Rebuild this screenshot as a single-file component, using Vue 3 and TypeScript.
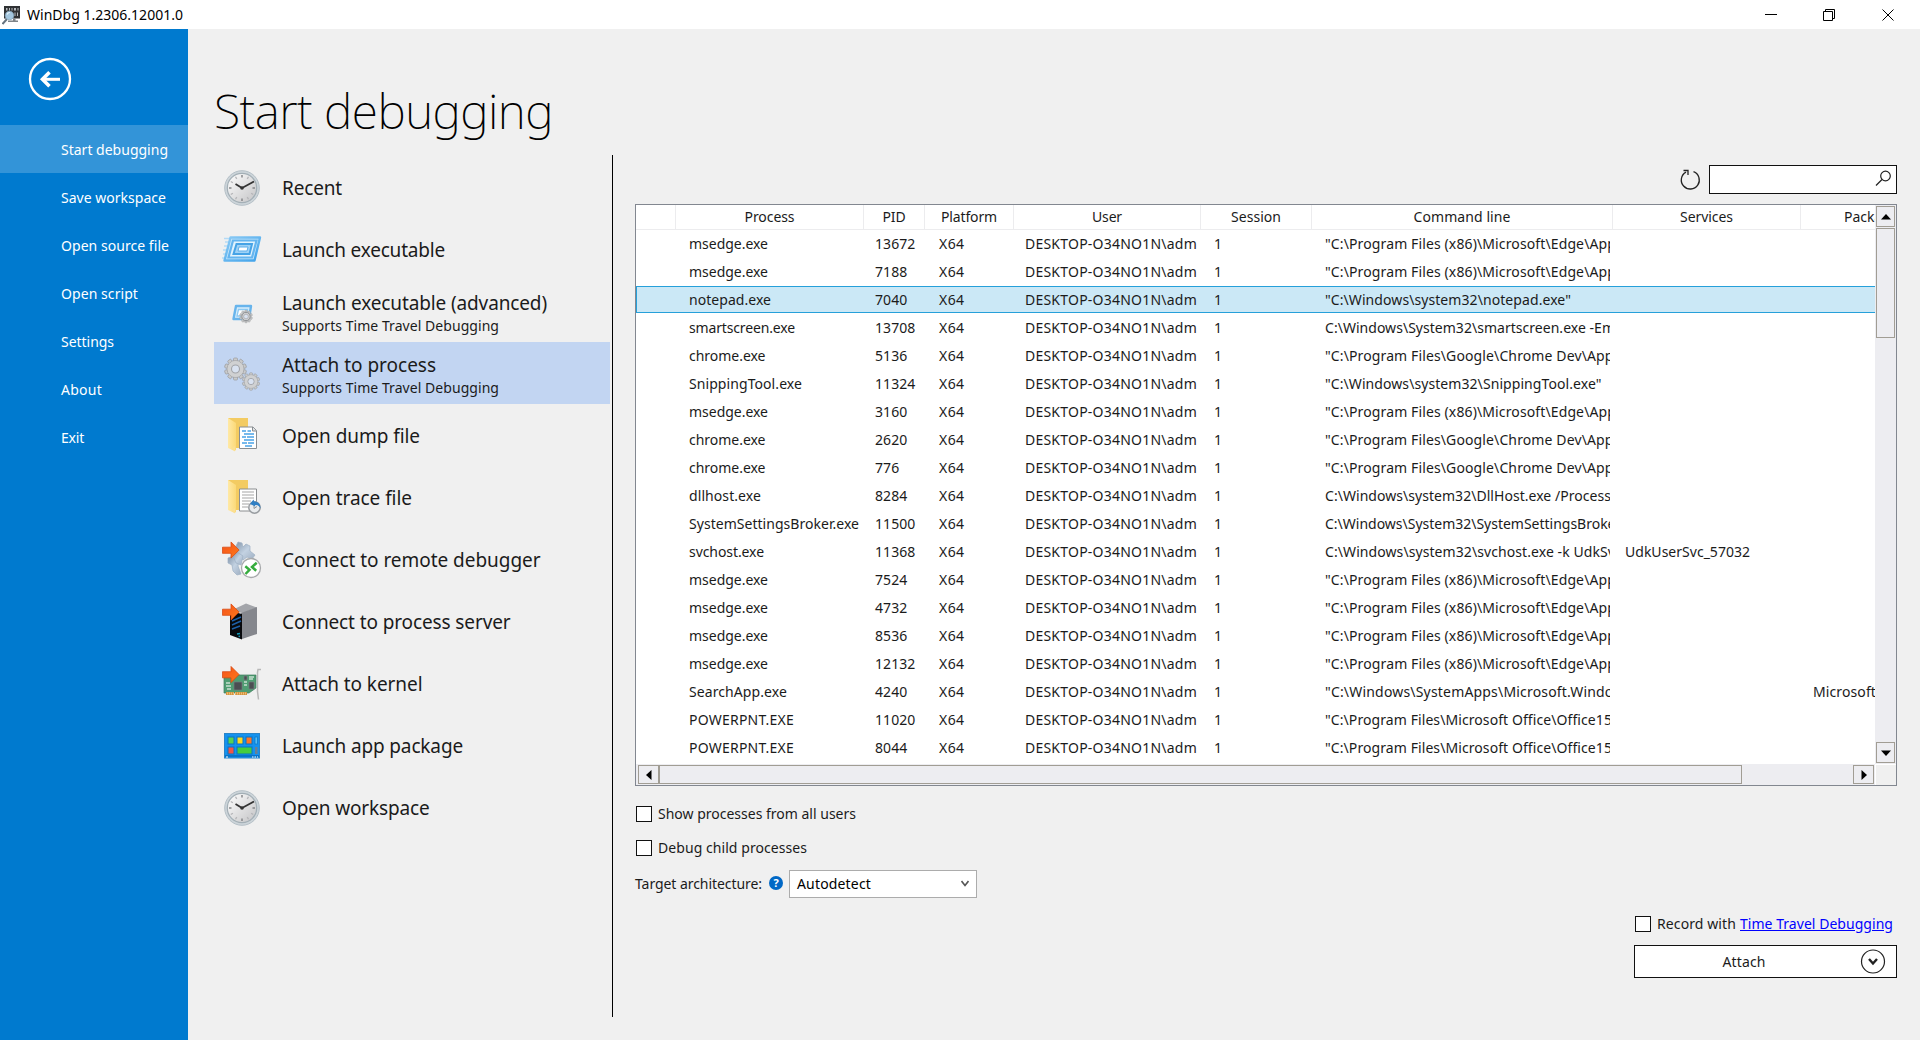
<script setup lang="ts">
import type { Directive } from 'vue'

interface Entry { label: string; width: number; note?: boolean; icon: string; active?: boolean }
interface Proc { name: string; nameW: number; pid: string; cmd: string; cmdW: number; service?: string; pkg?: string }

// Spreads letters so that a label takes the given width.
const vFit: Directive<HTMLElement, number> = {
  mounted(el, { value }) {
    const range = document.createRange()
    range.selectNodeContents(el)
    const natural = range.getBoundingClientRect().width
    const count = (el.textContent ?? '').length
    if (count) el.style.letterSpacing = `${((value - natural) / count).toFixed(3)}px`
  },
}

const menu = [
  { label: 'Start debugging', width: 107, active: true },
  { label: 'Save workspace', width: 105 },
  { label: 'Open source file', width: 108 },
  { label: 'Open script', width: 77 },
  { label: 'Settings', width: 53 },
  { label: 'About', width: 41 },
  { label: 'Exit', width: 23 },
]

const entries: Entry[] = [
  { label: 'Recent', width: 60, icon: 'clock' },
  { label: 'Launch executable', width: 163, icon: 'launch' },
  { label: 'Launch executable (advanced)', width: 265, note: true, icon: 'advanced' },
  { label: 'Attach to process', width: 154, note: true, icon: 'gears', active: true },
  { label: 'Open dump file', width: 138, icon: 'dump' },
  { label: 'Open trace file', width: 130, icon: 'trace' },
  { label: 'Connect to remote debugger', width: 258.5, icon: 'remote' },
  { label: 'Connect to process server', width: 228.5, icon: 'server' },
  { label: 'Attach to kernel', width: 140.5, icon: 'kernel' },
  { label: 'Launch app package', width: 181, icon: 'package' },
  { label: 'Open workspace', width: 147.5, icon: 'clock' },
]

const columns = [
  { label: '', width: 0 },
  { label: 'Process', width: 50 },
  { label: 'PID', width: 23 },
  { label: 'Platform', width: 56 },
  { label: 'User', width: 30 },
  { label: 'Session', width: 50 },
  { label: 'Command line', width: 97 },
  { label: 'Services', width: 53 },
  { label: 'Package', width: 55 },
]

const edge = '"C:\\Program Files (x86)\\Microsoft\\Edge\\App'
const chrome = '"C:\\Program Files\\Google\\Chrome Dev\\App'
const office = '"C:\\Program Files\\Microsoft Office\\Office15'

const procs: Proc[] = [
  { name: 'msedge.exe', nameW: 79, pid: '13672', cmd: edge, cmdW: 291 },
  { name: 'msedge.exe', nameW: 79, pid: '7188', cmd: edge, cmdW: 291 },
  { name: 'notepad.exe', nameW: 82, pid: '7040', cmd: '"C:\\Windows\\system32\\notepad.exe"', cmdW: 246 },
  { name: 'smartscreen.exe', nameW: 106, pid: '13708', cmd: 'C:\\Windows\\System32\\smartscreen.exe -Em', cmdW: 290 },
  { name: 'chrome.exe', nameW: 76.5, pid: '5136', cmd: chrome, cmdW: 288.5 },
  { name: 'SnippingTool.exe', nameW: 113, pid: '11324', cmd: '"C:\\Windows\\system32\\SnippingTool.exe"', cmdW: 276.5 },
  { name: 'msedge.exe', nameW: 79, pid: '3160', cmd: edge, cmdW: 291 },
  { name: 'chrome.exe', nameW: 76.5, pid: '2620', cmd: chrome, cmdW: 288.5 },
  { name: 'chrome.exe', nameW: 76.5, pid: '776', cmd: chrome, cmdW: 288.5 },
  { name: 'dllhost.exe', nameW: 72, pid: '8284', cmd: 'C:\\Windows\\system32\\DllHost.exe /Process', cmdW: 286 },
  { name: 'SystemSettingsBroker.exe', nameW: 170, pid: '11500', cmd: 'C:\\Windows\\System32\\SystemSettingsBroke', cmdW: 290.5 },
  { name: 'svchost.exe', nameW: 75, pid: '11368', cmd: 'C:\\Windows\\system32\\svchost.exe -k UdkSv', cmdW: 290, service: 'UdkUserSvc_57032' },
  { name: 'msedge.exe', nameW: 79, pid: '7524', cmd: edge, cmdW: 291 },
  { name: 'msedge.exe', nameW: 79, pid: '4732', cmd: edge, cmdW: 291 },
  { name: 'msedge.exe', nameW: 79, pid: '8536', cmd: edge, cmdW: 291 },
  { name: 'msedge.exe', nameW: 79, pid: '12132', cmd: edge, cmdW: 291 },
  { name: 'SearchApp.exe', nameW: 98, pid: '4240', cmd: '"C:\\Windows\\SystemApps\\Microsoft.Windo', cmdW: 288.5, pkg: 'Microsoft' },
  { name: 'POWERPNT.EXE', nameW: 105, pid: '11020', cmd: office, cmdW: 287 },
  { name: 'POWERPNT.EXE', nameW: 105, pid: '8044', cmd: office, cmdW: 287 },
]
const selected = 2
const ticks = Array.from({ length: 12 }, (_, i) => i * 30)
const teeth = Array.from({ length: 10 }, (_, i) => i * 36)
</script>

<template>
  <div class="window">
    <svg width="0" height="0" class="defs">
      <defs>
        <linearGradient id="face" x1="0" y1="0" x2="1" y2="1"><stop offset="0" stop-color="#fff" /><stop offset="1" stop-color="#c3c3c5" /></linearGradient>
        <linearGradient id="blue" x1="0" y1="0" x2="1" y2="1"><stop offset="0" stop-color="#8ccbf5" /><stop offset="1" stop-color="#3fa2ea" /></linearGradient>
        <linearGradient id="arrow" x1="0" y1="0" x2="1" y2="1"><stop offset="0" stop-color="#f4521a" /><stop offset="1" stop-color="#ff7a1a" /></linearGradient>
        <linearGradient id="fold" x1="0" y1="0" x2="1" y2="0"><stop offset="0" stop-color="#ffe9a6" /><stop offset="1" stop-color="#fbd978" /></linearGradient>
        <linearGradient id="steel" x1="0" y1="0" x2="1" y2="1"><stop offset="0" stop-color="#8496aa" /><stop offset=".5" stop-color="#c3d2e2" /><stop offset="1" stop-color="#9fafc2" /></linearGradient>
      </defs>
      <symbol id="gear" viewBox="-12 -12 24 24">
        <g fill="#c9cacb" stroke="#9fa1a3" stroke-width=".8">
          <rect v-for="a in teeth" :key="a" x="-2" y="-11" width="4" height="5" rx="1" :transform="`rotate(${a})`" />
          <circle r="8.4" />
        </g>
        <circle r="8" fill="#d0d1d2" />
        <circle r="4" fill="#d9e2f0" stroke="#a2a4a8" stroke-width="1.1" />
      </symbol>
      <symbol id="folder" viewBox="0 0 40 40">
        <path d="M6 2h20v30H13z" fill="#f3cb62" />
        <path d="M6 2l8 5v27l-1.500 1L6 32z" fill="url(#fold)" />
        <path d="M9 32l4-2v5.500z" fill="#fbdf91" />
      </symbol>
      <symbol id="push" viewBox="0 0 20 20">
        <path d="M.5 6.500h9V1L18 9.500 9.500 18v-5H.5z" fill="url(#arrow)" stroke="#d9480f" stroke-width=".8" />
      </symbol>
    </svg>

    <header class="titlebar">
      <svg class="app-icon" width="18" height="20" viewBox="0 0 18 20">
        <rect x="2" y="1" width="16" height="12.500" fill="#303234" />
        <path d="M4 3h1.500v2.500H4zM7 3h1v2.500H7zM9.500 3h1v2.500h-1zM12 3h2v2.500h-2zM15.500 3h1v2.500h-1zM12.500 7.500h1V11h-1zM15 7.500h1V11h-1z" fill="#b8bcc0" />
        <path d="M11 13.500h2.500v2H16V17H6v-1.500h5z" fill="#7e8489" />
        <path d="M.5 19L5 14" stroke="#65737f" stroke-width="2" />
        <circle cx="7.500" cy="10.500" r="4.300" fill="#a4c7df" stroke="#86a5ba" stroke-width=".8" />
        <path d="M5 9.500a3 3 0 0 1 3-2" fill="none" stroke="#e5f3fc" stroke-width="1.200" />
      </svg>
      <span v-fit="156" class="app-title">WinDbg 1.2306.12001.0</span>
      <svg class="controls" width="130" height="14" viewBox="0 0 130 14" fill="none" stroke="#000">
        <path d="M0 6.500h12" />
        <path d="M58.500 3.500h9v9h-9zM60.500 3.500v-2h9v9h-2" />
        <path d="M117.500 1.500l11 11M128.500 1.500l-11 11" />
      </svg>
    </header>

    <div class="body">
      <aside class="sidebar">
        <svg class="back" width="44" height="44" viewBox="0 0 44 44" fill="none" stroke="#fff">
          <circle cx="22" cy="22" r="20" stroke-width="2.300" />
          <path d="M32 22.300H14" stroke-width="3" />
          <path d="M21.500 15.300L14.500 22.300l7 7" stroke-width="3.600" />
        </svg>
        <nav>
          <div v-for="m in menu" :key="m.label" class="nav-item" :class="{ active: m.active }">
            <span v-fit="m.width">{{ m.label }}</span>
          </div>
        </nav>
      </aside>

      <main class="content">
        <h1><span v-fit="339">Start debugging</span></h1>
        <div class="columns">
          <section class="entries">
            <div v-for="e in entries" :key="e.label" class="entry" :class="{ active: e.active }">
              <svg class="entry-icon" width="40" height="40" viewBox="0 0 40 40">
                <g v-if="e.icon === 'clock'">
                  <circle cx="20" cy="20" r="17.300" fill="#cdd5da" stroke="#b4bfc6" />
                  <circle cx="20" cy="20" r="14.700" fill="url(#face)" stroke="#a3afb6" stroke-width="1.200" />
                  <path v-for="a in ticks" :key="a" d="M20 7v2.500" :stroke="a % 90 ? '#b5b5b8' : '#77797c'" stroke-width="1.300" :transform="`rotate(${a} 20 20)`" />
                  <path d="M13.500 16L20 20l12-6.500" fill="none" stroke="#333" stroke-width="1.800" />
                  <circle cx="20" cy="20" r="1.800" fill="#333" />
                </g>
                <g v-else-if="e.icon === 'launch'">
                  <path d="M2 8.500h6M3 12h5M2 16h5M1 20h5M1 24h4M0 28h4" stroke="#b4daf5" stroke-width="1.600" />
                  <path d="M8.500 7.500H38L32.500 30.500H2.500z" fill="#c7e6fb" stroke="url(#blue)" stroke-width="2.400" stroke-linejoin="round" />
                  <path d="M11 10.500h23.500l-4.500 17H6.500z" fill="#e2f3fd" stroke="#65b5ef" stroke-width="2.200" />
                  <path d="M14.500 14h15.500L27.500 24h-16z" fill="#9fd2f6" stroke="#46a3e6" stroke-width="2" />
                  <path d="M17 17h9l-1 4h-9z" fill="#fff" stroke="#5dafeb" />
                </g>
                <g v-else-if="e.icon === 'advanced'" transform="translate(0 1.500)">
                  <path d="M14 12.500h15L27 25.500H11.500z" fill="#d7edfb" stroke="#67b4ec" stroke-width="2.400" stroke-linejoin="round" />
                  <path d="M16.500 16h9l-1.500 6.500h-9z" fill="#fff" stroke="#8cc9f3" stroke-width="1.300" />
                  <use href="#gear" x="17" y="16" width="14" height="14" />
                  <path d="M19.800 23a4.200 4.200 0 1 1 8.400 0 4.200 4.200 0 1 1-8.400 0" fill="none" stroke="#85888b" stroke-width=".9" />
                </g>
                <g v-else-if="e.icon === 'gears'">
                  <use href="#gear" x="1.500" y="3" width="24" height="24" />
                  <use href="#gear" x="19.500" y="18" width="19" height="19" />
                </g>
                <g v-else-if="e.icon === 'dump'">
                  <use href="#folder" width="40" height="40" />
                  <path d="M17.500 11H31l3.500 3.500V32.500h-17z" fill="#fff" stroke="#888d91" />
                  <path d="M30.500 11v4h4" fill="#dfe2e4" stroke="#888d91" />
                  <path d="M20 15h4m1.500 0H29M22 18h10M20 21h4m1 0h7M22 24h10M20 27h5m1 0h6M23 30h7" stroke="#4aa3e6" stroke-width="1.500" />
                </g>
                <g v-else-if="e.icon === 'trace'">
                  <use href="#folder" width="40" height="40" />
                  <path d="M17.500 11h17v22h-17z" fill="#fff" stroke="#8b8e90" />
                  <path d="M20 14h12M20 17h12M20 20h12M20 23h9M20 26h7M20 29h6" stroke="#a5a5a5" stroke-width="1.200" />
                  <circle cx="32.500" cy="29.500" r="5.700" fill="#e9ecee" stroke="#989ca0" stroke-width="1.500" />
                  <path d="M32 26.500v4l3-2" fill="none" stroke="#92979b" />
                  <path d="M28 26l3.500-4.500.7 2c4 0 6.300 2.500 6.300 7-1-2.500-3-4-5.500-3.500l.5 1.500z" fill="#2f7fc4" />
                </g>
                <g v-else-if="e.icon === 'remote'">
                  <g fill="url(#steel)" stroke="#9db0c4" stroke-width=".7">
                    <path d="M14 6l2-4 4 1 1 4 3-3 4 2v5l5 4-3 4-5-2-4 3-5-6z" />
                    <path d="M6 18l5-2 6 4-1 6 3 8-4 1-4-4-1-6-4-2z" />
                    <path d="M15 12l6 4-2 9-5-2-3-7z" />
                  </g>
                  <use href="#push" x="0" y="1" width="19" height="19" />
                  <circle cx="29" cy="28" r="9.500" fill="#fff" stroke="#a7a9ab" stroke-width="1.300" />
                  <path d="M23.300 26.300l4.200 3.500-4 4.200M34.700 22.800L30 27l4.200 3.700" fill="none" stroke="#35ac3d" stroke-width="2.500" />
                </g>
                <g v-else-if="e.icon === 'server'">
                  <path d="M8 9L24 1.500l11 4L21 11z" fill="#a3a5aa" />
                  <path d="M19 11l16-6v27l-15 5z" fill="#85878d" />
                  <path d="M8 9l12 3v25.500L8 33z" fill="#08090c" />
                  <path d="M10 19l9-4M10 23l9-4M10 27l8-3" stroke="#1d5fa8" stroke-width="1.500" />
                  <path d="M15 32l3-.5M16.500 34.500l1.500-.3" stroke="#159bb8" stroke-width="1.500" />
                  <use href="#push" x="0" y="1" width="19" height="19" />
                </g>
                <g v-else-if="e.icon === 'kernel'">
                  <path d="M2 11h32v13l-7 5H2z" fill="#4f9d72" stroke="#3c7c5b" stroke-width=".7" />
                  <path d="M4 28h8v3H4zM13 28h12v3H13z" fill="#d39440" />
                  <path d="M5 29.500h20" stroke="#efc078" stroke-dasharray="1 1" stroke-width="2" />
                  <path d="M12 18h8v8h-8zM27 18h5v7h-5zM22 12h3v4h-3z" fill="#4b4e52" stroke="#777c7e" stroke-width=".7" />
                  <path d="M4 19h4M4 22h5M5 25h4M22 18h3M22 21h3M27 13h5M27 15h4" stroke="#c8ded0" stroke-width="1.300" />
                  <path d="M39 5.500h-3l-.5 3v19l1 8" fill="none" stroke="#b8b8b8" stroke-width="1.500" />
                  <use href="#push" x="0" y="1.500" width="19" height="19" />
                </g>
                <g v-else>
                  <rect x="2.500" y="7.500" width="35" height="24.500" fill="#1592ee" stroke="#2a84c8" />
                  <path d="M3 30h34" stroke="#0874c9" stroke-width="2" />
                  <rect x="6" y="11" width="6" height="7" fill="#55d353" stroke="#0b72c2" />
                  <rect x="15" y="11" width="6" height="7" fill="#ffd91f" stroke="#0b72c2" />
                  <rect x="24" y="11" width="6" height="7" fill="#ff7526" stroke="#0b72c2" />
                  <rect x="33" y="11" width="2.500" height="7" fill="#55bdf3" stroke="#0b72c2" stroke-width=".7" />
                  <rect x="6" y="21" width="6" height="7" fill="#f25545" stroke="#0b72c2" />
                  <rect x="15" y="21" width="15" height="7" fill="#45cd3d" stroke="#0b72c2" />
                  <rect x="33" y="21" width="2.500" height="7" fill="#6b8090" />
                  <path d="M4 31h2M30 31h1.500m1 0h1.500m1 0h1" stroke="#fff" />
                </g>
              </svg>
              <div class="entry-text">
                <span class="entry-label"><span v-fit="e.width">{{ e.label }}</span></span>
                <span v-if="e.note" class="entry-note"><span v-fit="217">Supports Time Travel Debugging</span></span>
              </div>
            </div>
          </section>

          <section class="panel">
            <div class="search-row">
              <svg width="22" height="22" viewBox="0 0 22 22" fill="none" stroke="#222" stroke-width="1.300">
                <path d="M14.500 2.600A9 9 0 1 1 7 3.100" />
                <path d="M4.500 1.500H9v4.500" />
              </svg>
              <div class="search">
                <svg width="18" height="18" viewBox="0 0 18 18" fill="none" stroke="#222" stroke-width="1.200">
                  <circle cx="11.500" cy="6" r="4.800" /><path d="M8 9.500L2 15.500" />
                </svg>
              </div>
            </div>

            <div class="grid">
              <div class="view">
                <div class="row head">
                  <div v-for="c in columns" :key="c.label" class="th"><span v-if="c.label" v-fit="c.width">{{ c.label }}</span></div>
                </div>
                <div v-for="(p, i) in procs" :key="i" class="row" :class="{ selected: i === selected }">
                  <div class="td"></div>
                  <div class="td"><span v-fit="p.nameW">{{ p.name }}</span></div>
                  <div class="td"><span v-fit="p.pid.length * 8.080">{{ p.pid }}</span></div>
                  <div class="td"><span v-fit="25.500">X64</span></div>
                  <div class="td"><span v-fit="172">DESKTOP-O34NO1N\adm</span></div>
                  <div class="td">1</div>
                  <div class="td"><span v-fit="p.cmdW">{{ p.cmd }}</span></div>
                  <div class="td"><span v-if="p.service" v-fit="125">{{ p.service }}</span></div>
                  <div class="td"><span v-if="p.pkg" v-fit="63">{{ p.pkg }}</span></div>
                </div>
              </div>
              <div class="vbar">
                <div class="arrow-btn"><svg width="12" height="6" viewBox="0 0 12 6"><path d="M1 5.500L6 0l5 5.500z" /></svg></div>
                <div class="vthumb"></div>
                <div class="spacer"></div>
                <div class="arrow-btn"><svg width="12" height="6" viewBox="0 0 12 6"><path d="M1 .5L6 6l5-5.500z" /></svg></div>
              </div>
              <div class="hbar">
                <div class="arrow-btn"><svg width="6" height="12" viewBox="0 0 6 12"><path d="M5.500 1L0 6l5.500 5z" /></svg></div>
                <div class="hthumb"></div>
                <div class="spacer"></div>
                <div class="arrow-btn"><svg width="6" height="12" viewBox="0 0 6 12"><path d="M.5 1L6 6 .5 11z" /></svg></div>
              </div>
              <div class="corner"></div>
            </div>

            <div class="check first"><i class="box"></i><span v-fit="198">Show processes from all users</span></div>
            <div class="check"><i class="box"></i><span v-fit="149">Debug child processes</span></div>
            <div class="arch">
              <span v-fit="127">Target architecture:</span>
              <span class="help">?</span>
              <div class="select">
                <span v-fit="74">Autodetect</span>
                <svg width="8" height="7" viewBox="0 0 8 7" fill="none" stroke="#555" stroke-width="1.600"><path d="M.5 1L4 5.500 7.500 1" /></svg>
              </div>
            </div>

            <div class="launch">
              <div class="check record"><i class="box"></i><span v-fit="79">Record with</span><a v-fit="153">Time Travel Debugging</a></div>
              <button class="attach">
                <span class="attach-label"><span v-fit="43">Attach</span></span>
                <svg width="26" height="26" viewBox="0 0 26 26" fill="none" stroke="#222"><circle cx="13" cy="12.500" r="11.500" stroke-width="1.200" /><path d="M9 10l4 4.500 4-4.500" stroke-width="2.400" /></svg>
              </button>
            </div>
          </section>
        </div>
      </main>
    </div>
  </div>
</template>

<style>
body { margin: 0; overflow: hidden; }
</style>

<style scoped>
* { box-sizing: border-box; }
.window { width: 1920px; height: 1040px; display: flex; flex-direction: column; background: #f0f0f0; color: #1b1b1b; font-family: "Noto Sans", "Open Sans", sans-serif; font-size: 14px; line-height: 20px; white-space: nowrap; overflow: hidden; }
.defs { position: absolute; }
span, a { display: inline-block; }
.titlebar { height: 29px; flex: none; display: flex; align-items: center; background: #fff; color: #000; padding: 0 25px 0 2px; }
.app-icon { margin-right: 7px; }
.controls { margin-left: auto; }
.body { flex: 1; display: flex; min-height: 0; }
.sidebar { width: 188px; background: #007acf; color: #fff; }
.back { display: block; margin: 28px 0 24px 28px; }
.nav-item { height: 48px; padding: 1px 0 0 61px; display: flex; align-items: center; }
.nav-item.active { background: #3394d8; }
.content { flex: 1; min-width: 0; padding-left: 26px; display: flex; flex-direction: column; }
h1 { margin: 0; height: 126px; padding-top: 47px; font-size: 48px; line-height: 70px; font-weight: 200; color: #000; }
.columns { display: flex; height: 862px; }
.entries { width: 399px; padding-top: 1px; border-right: 1px solid #000; }
.entry { width: 396px; height: 62px; display: flex; align-items: center; color: #1b1b1b; }
.entry.active { background: #c2d5f2; }
.entry-icon { margin: 2px 20px 0 8px; flex: none; }
.entry-text { display: flex; flex-direction: column; padding-top: 2px; }
.entry-label { font-size: 19px; line-height: 26px; }
.entry-note { line-height: 19px; }
.panel { flex: 1; padding: 10px 23px 0 22px; display: flex; flex-direction: column; }
.search-row { display: flex; justify-content: flex-end; gap: 8px; height: 29px; align-items: center; margin-bottom: 10px; }
.search { width: 188px; height: 29px; border: 1px solid #111; background: #fff; display: flex; justify-content: flex-end; padding: 4px 4px 0 0; }
.grid { height: 582px; flex: none; border: 1px solid #828790; background: #fff; display: grid; grid-template: 559px 21px / 1239px 21px; }
.view { overflow: hidden; }
.row { display: grid; grid-template-columns: 40px 188px 61px 89px 187px 111px 301px 188px 175px; height: 28px; width: 1340px; }
.head { height: 25px; }
.th { display: flex; align-items: center; justify-content: center; border-right: 1px solid #ececee; border-bottom: 1px solid #ececee; }
.th:last-child { justify-content: flex-start; padding-left: 43px; }
.row .td { padding-left: 13px; height: 28px; line-height: 28px; margin-right: 2px; overflow: hidden; }
.row .td:nth-child(3) { padding-left: 11px; }
.row .td:nth-child(4) { padding-left: 14px; }
.row .td:nth-child(5) { padding-left: 11px; }
.row .td:nth-child(7) { margin-right: 3px; }
.row .td:nth-child(8), .row .td:nth-child(9) { padding-left: 12px; }
.selected { background: #cbe8f6; box-shadow: inset 1px 1px #26a0da, inset 0 -1px #26a0da; height: 27px; margin-bottom: 1px; }
.vbar { background: #ededf1; display: flex; flex-direction: column; padding: 1px 1px; }
.arrow-btn { width: 19px; height: 21px; flex: none; border: 1px solid #a19d94; background: #ededf1; display: flex; align-items: center; justify-content: center; }
.vthumb { height: 110px; margin-top: 1px; border: 1px solid #a19d94; }
.spacer { flex: 1; }
.hbar { background: #ededf1; display: flex; padding: 1px 1px 1px 2px; }
.hbar .arrow-btn { width: 21px; height: 19px; }
.hthumb { width: 1083px; height: 19px; border: 1px solid #a19d94; }
.corner { background: #f0f0f0; border: solid #fff; border-width: 1px 0 0 1px; }
.check { height: 34px; display: flex; align-items: center; gap: 6px; padding-left: 1px; }
.check.first { margin-top: 11px; }
.box { width: 16px; height: 16px; border: 1px solid #111; background: #fff; flex: none; }
.arch { display: flex; align-items: center; height: 29px; margin-top: 4px; }
.help { width: 14px; height: 14px; margin: -2px 6px 0 7px; border-radius: 50%; background: #0068c6; color: #fff; font-size: 11px; line-height: 14px; font-weight: 700; text-align: center; }
.select { width: 188px; height: 28px; border: 1px solid #acacac; background: #fff; display: flex; align-items: center; justify-content: space-between; padding: 0 7px; color: #000; }
.launch { align-self: flex-end; width: 263px; margin-top: 9px; }
.record { height: 34px; margin-bottom: 4px; }
.record a { color: #00f; text-decoration: underline; margin-left: -2px; }
.attach { display: flex; align-items: center; width: 263px; height: 33px; padding: 0 10px 0 0; border: 1px solid #111; background: #fff; color: #1b1b1b; font: inherit; }
.attach-label { flex: 1; padding-right: 7px; }
</style>
